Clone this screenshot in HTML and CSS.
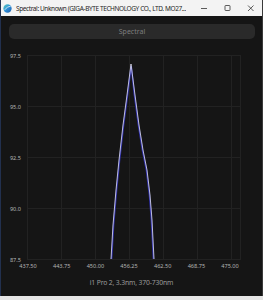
FILE: index.html
```html
<!DOCTYPE html>
<html lang="en">

<head>
    <meta charset="UTF-8">
    <title>Spectral</title>
    <link rel="stylesheet" href="styles.css">
</head>

<body>

<div class="window">
    <!-- Barra de titulo -->
    <div class="titlebar">
        <svg class="app-icon" width="9" height="9" viewBox="0 0 10 10">
            <defs>
                <linearGradient id="g" x1="0" y1="0" x2="1" y2="1">
                    <stop offset="0" stop-color="#5ad0c0"/>
                    <stop offset="0.5" stop-color="#2f8fd8"/>
                    <stop offset="1" stop-color="#1c5aa8"/>
                </linearGradient>
            </defs>
            <circle cx="5" cy="5" r="4.6" fill="url(#g)"/>
            <path d="M2 6.5 C4 3.5 6 3 8.5 2.5" stroke="#e8f6f4" stroke-width="0.9" fill="none"/>
        </svg>
        <span class="title">Spectral: Unknown (GIGA-BYTE TECHNOLOGY CO., LTD. MO27...</span>
        <div class="controls">
            <span class="ctl">
                <svg width="10" height="10" viewBox="0 0 10 10"><path d="M1 5.5 H7" stroke="#333" stroke-width="0.8"/></svg>
            </span>
            <span class="ctl">
                <svg width="10" height="10" viewBox="0 0 10 10"><rect x="2" y="2.5" width="5" height="5" rx="0.6" fill="none" stroke="#333" stroke-width="0.8"/></svg>
            </span>
            <span class="ctl">
                <svg width="10" height="10" viewBox="0 0 10 10"><path d="M2 2.5 L7.5 8 M7.5 2.5 L2 8" stroke="#333" stroke-width="0.8"/></svg>
            </span>
        </div>
    </div>

    <div class="content">
        <button class="btn-spectral">Spectral</button>

        <!-- Grafica -->
        <svg class="chart" width="261" height="228" viewBox="1 44 261 228">
            <g class="grid">
                <line x1="27" y1="55.5" x2="240" y2="55.5"/>
                <line x1="27" y1="106.5" x2="240" y2="106.5"/>
                <line x1="27" y1="157.5" x2="240" y2="157.5"/>
                <line x1="27" y1="208.5" x2="240" y2="208.5"/>
                <line x1="27" y1="259.5" x2="240" y2="259.5"/>
                <line x1="27.5" y1="55" x2="27.5" y2="260"/>
                <line x1="61.5" y1="55" x2="61.5" y2="260"/>
                <line x1="95.5" y1="55" x2="95.5" y2="260"/>
                <line x1="129.5" y1="55" x2="129.5" y2="260"/>
                <line x1="163.5" y1="55" x2="163.5" y2="260"/>
                <line x1="197.5" y1="55" x2="197.5" y2="260"/>
                <line x1="231.5" y1="55" x2="231.5" y2="260"/>
                <line x1="240.5" y1="55" x2="240.5" y2="260"/>
            </g>
            <g class="y-labels">
                <text x="21" y="57.5">97.5</text>
                <text x="21" y="108.5">95.0</text>
                <text x="21" y="159.5">92.5</text>
                <text x="21" y="210.5">90.0</text>
                <text x="21" y="261.5">87.5</text>
            </g>
            <g class="x-labels">
                <text x="28" y="268">437.50</text>
                <text x="61.7" y="268">443.75</text>
                <text x="95.4" y="268">450.00</text>
                <text x="129" y="268">456.25</text>
                <text x="162.7" y="268">462.50</text>
                <text x="196.4" y="268">468.75</text>
                <text x="230" y="268">475.00</text>
            </g>
            <polyline class="curve-shadow" points="111.6,259 113.6,225 116.6,190 119.6,160 123.6,125 127.6,95 131.2,66 134.4,95 138.4,125 142.4,150 146.4,170 149.4,195 151.4,220 153.4,259"/>
            <polyline class="curve" points="111,259 113,225 116,190 119,160 123,125 127,95 131,64 135,95 139,125 143,150 147,170 150,195 152,220 154,259"/>
        </svg>

        <div class="caption">i1 Pro 2, 3.3nm, 370-730nm</div>
    </div>
</div>

</body>

</html>
```

FILE: styles.css
```css
* {
    box-sizing: border-box;
    font-family: 'Noto Sans', 'Open Sans', sans-serif;
}

body {
    margin: 0;
    padding: 0;
    width: 263px;
    height: 300px;
    background-color: #e6e6e6;
    overflow: hidden;
}

.window {
    width: 263px;
    height: 296px;
    border-left: 1px solid #22304e;
    border-right: 1px solid #3a3a3a;
    display: flex;
    flex-direction: column;
    background-color: #151515;
}

/* BARRA DE TITULO */
.titlebar {
    height: 16px;
    display: flex;
    align-items: center;
    background-color: #f3f3f3;
    padding-left: 2px;
}

.app-icon {
    flex: none;
    margin-right: 4px;
}

.title {
    flex: 0 1 auto;
    min-width: 0;
    font-size: 6.5px;
    letter-spacing: -0.4px;
    color: #1f1f1f;
    white-space: nowrap;
    overflow: hidden;
}

.controls {
    flex: none;
    display: flex;
    margin-left: auto;
}

.ctl {
    width: 23px;
    height: 16px;
    display: flex;
    justify-content: center;
    align-items: center;
}

/* CONTENIDO */
.content {
    flex: 1;
    display: flex;
    flex-direction: column;
}

.btn-spectral {
    margin: 8px 7px 0 8px;
    height: 15px;
    border: none;
    border-radius: 5px;
    background-color: #2a2a2a;
    color: #7e7e7e;
    font-size: 7px;
    padding: 0;
}

.chart {
    display: block;
    margin-top: 5px;
}

.grid line {
    stroke: #222222;
    stroke-width: 1;
}

.y-labels text {
    fill: #b4b4b4;
    font-size: 5.6px;
    text-anchor: end;
}

.x-labels text {
    fill: #b4b4b4;
    font-size: 5.6px;
    text-anchor: middle;
}

.curve-shadow {
    fill: none;
    stroke: #2e2ea8;
    stroke-width: 1.5;
}

.curve {
    fill: none;
    stroke: #e4e4f6;
    stroke-width: 0.8;
}

.caption {
    text-align: center;
    font-size: 6.8px;
    letter-spacing: -0.15px;
    color: #9c9c9c;
    margin-top: 6px;
}
```
